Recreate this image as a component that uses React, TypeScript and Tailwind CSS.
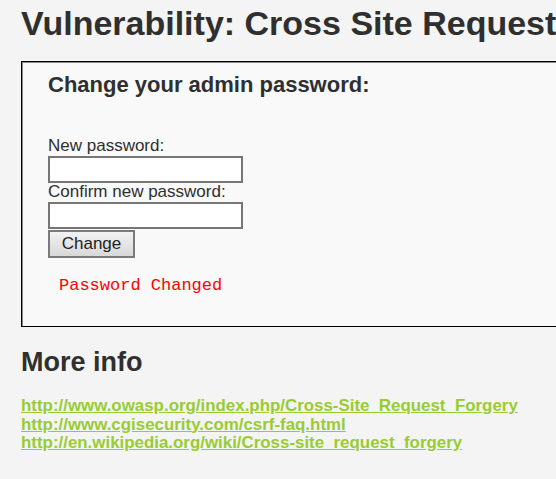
import React from "react";

export default function App() {
  return (
    <div className="w-[556px] h-[479px] overflow-hidden bg-[#f4f4f4] text-[#2f2f2f] font-['Liberation_Sans',Arial,sans-serif]">
      <div className="pl-[21px] pt-[4px]">
        <h1 className="text-[34px] font-bold leading-[38px] whitespace-nowrap">
          Vulnerability: Cross Site Request
        </h1>
        <div className="mt-[19px] w-[700px] h-[266px] border border-black shadow-[inset_1px_1px_0_#8a8a8a] bg-[#f8f9f8] pl-[26px] pt-[10px]">
          <h3 className="text-[22px] font-bold leading-[26px]">Change your admin password:</h3>
          <div className="mt-[39px] text-[17px] leading-[18px]">New password:</div>
          <input
            type="password"
            className="mt-[1px] block w-[195px] h-[27px] bg-white border-2 border-[#767676]"
          />
          <div className="text-[17px] leading-[18px]">Confirm new password:</div>
          <input
            type="password"
            className="mt-[1px] block w-[195px] h-[27px] bg-white border-2 border-[#767676]"
          />
          <button className="mt-[1px] block w-[87px] h-[28px] border-2 border-[#7a7a7a] bg-gradient-to-b from-[#f2f2f2] to-[#d8d8d8] text-[17px] leading-[20px] text-[#222]">
            Change
          </button>
          <pre className="mt-[19px] ml-[11px] font-['Liberation_Mono','Courier_New',monospace] text-[17px] leading-[18px] text-[#ff0000]">
            Password Changed
          </pre>
        </div>
        <h2 className="mt-[19px] text-[27px] font-bold leading-[32px]">More info</h2>
        <ul className="mt-[19px] text-[16.9px] font-bold leading-[18.5px]">
          <li>
            <a href="#" className="underline text-[#99cc33]">http://www.owasp.org/index.php/Cross-Site_Request_Forgery</a>
          </li>
          <li>
            <a href="#" className="underline text-[#99cc33]">http://www.cgisecurity.com/csrf-faq.html</a>
          </li>
          <li>
            <a href="#" className="underline text-[#99cc33]">http://en.wikipedia.org/wiki/Cross-site_request_forgery</a>
          </li>
        </ul>
      </div>
    </div>
  );
}
